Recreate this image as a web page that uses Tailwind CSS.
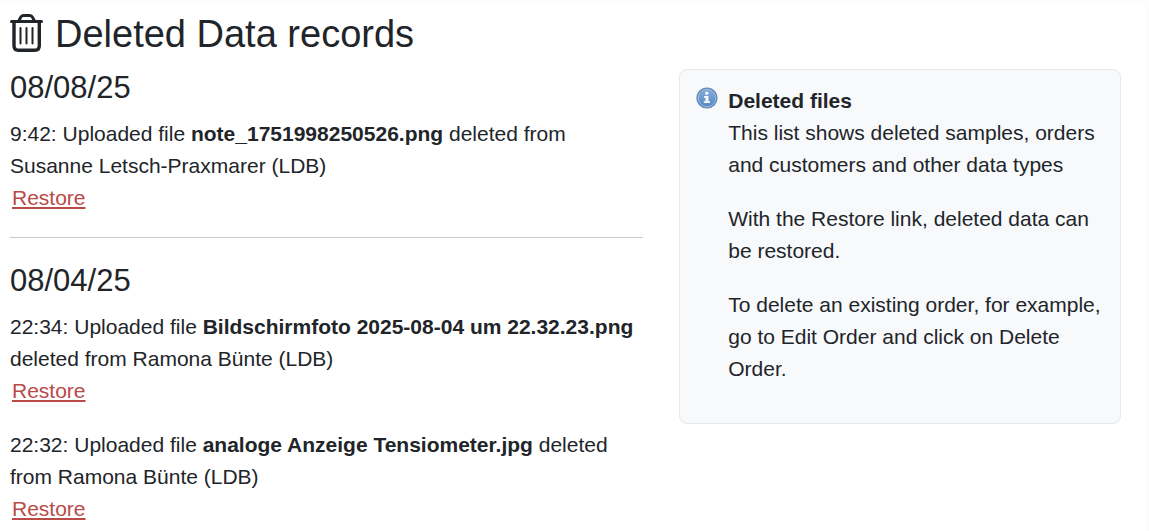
<!DOCTYPE html>
<html lang="en">

<head>
    <meta charset="UTF-8">
    <meta name="viewport" content="width=device-width, initial-scale=1.0">
    <title>Deleted Data records</title>
    <script src="https://cdn.jsdelivr.net/npm/@tailwindcss/browser@4"></script>
</head>

<body class="bg-[#fcfcfc] pr-1 font-['Liberation_Sans',Arial,sans-serif] text-[21px] leading-8 text-[#212529]">
    <main class="min-h-screen border-t-4 border-[#fdfdfd] bg-white pt-[7px] pr-6 pl-[10px]">
        <h1 class="flex items-center gap-3 mb-3 text-[38px] leading-[46px]">
            <svg class="w-[33px] h-10 shrink-0" viewBox="0 0 33 40" fill="none" stroke="currentColor" stroke-linecap="round" stroke-linejoin="round" aria-hidden="true">
                <path stroke-width="3" d="M1.5 7.4h30M8.8 7l1.8-3.6Q11.6 1.5 13.4 1.5h6.4q1.8 0 2.8 1.9L24.4 7" />
                <path stroke-width="3.4" d="M4 8v23.8q0 4.5 4.5 4.5h16.3q4.5 0 4.5-4.5V8" />
                <path stroke-width="2" d="M10.5 14v15.5M16.5 14v15.5M22.5 14v15.5" />
            </svg>
            Deleted Data records
        </h1>

        <div class="grid grid-cols-[43fr_30fr] items-start gap-9">
            <!-- Deleted records by day -->
            <div>
                <section>
                    <h2 class="mb-3 text-[31px] leading-[37px]">08/08/25</h2>
                    <p>
                        9:42: Uploaded file <strong>note_1751998250526.png</strong> deleted from Susanne Letsch-Praxmarer (LDB)<br>
                        <a href="#" class="ml-0.5 text-[#b94a48] underline">Restore</a>
                    </p>
                </section>

                <hr class="mt-[23px] mb-6 border-[#c8c9ca]">

                <section>
                    <h2 class="mb-3 text-[31px] leading-[37px]">08/04/25</h2>
                    <p class="mb-[22px]">
                        22:34: Uploaded file <strong>Bildschirmfoto 2025-08-04 um 22.32.23.png</strong> deleted from Ramona Bünte (LDB)<br>
                        <a href="#" class="ml-0.5 text-[#b94a48] underline">Restore</a>
                    </p>
                    <p>
                        22:32: Uploaded file <strong>analoge Anzeige Tensiometer.jpg</strong> deleted from Ramona Bünte (LDB)<br>
                        <a href="#" class="ml-0.5 text-[#b94a48] underline">Restore</a>
                    </p>
                </section>
            </div>

            <!-- Help box -->
            <aside class="flex gap-[10px] rounded-lg border border-[#e5e9ed] bg-[#f8f9fb] px-4 pt-[15px] pb-4">
                <svg class="w-[22px] h-[22px] mt-0.5 shrink-0" viewBox="0 0 22 22" aria-hidden="true">
                    <defs>
                        <linearGradient id="infoFill" x1="0" y1="0" x2="0" y2="1">
                            <stop offset="0" stop-color="#86addb" />
                            <stop offset="1" stop-color="#5587c3" />
                        </linearGradient>
                    </defs>
                    <circle cx="11" cy="11" r="10.6" fill="#6288b8" />
                    <circle cx="11" cy="11" r="8.8" fill="url(#infoFill)" stroke="#9dbde2" />
                    <circle cx="10.8" cy="6.3" r="1.7" fill="#f3f7fc" />
                    <path fill="#f3f7fc" d="M8 9h4.5v5.3H14V16H7.8v-1.7h1.6v-3.6H8z" />
                </svg>
                <div>
                    <h3 class="font-bold">Deleted files</h3>
                    <p class="mb-[22px]">This list shows deleted samples, orders and customers and other data types</p>
                    <p class="mb-[22px]">With the Restore link, deleted data can be restored.</p>
                    <p class="mb-[22px]">To delete an existing order, for example, go to Edit Order and click on Delete Order.</p>
                </div>
            </aside>
        </div>
    </main>
</body>

</html>
